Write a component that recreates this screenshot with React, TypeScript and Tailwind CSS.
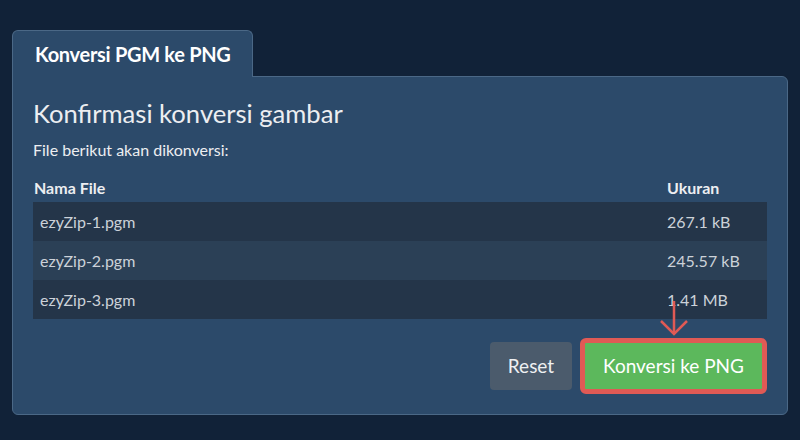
const files = [
  { name: 'ezyZip-1.pgm', size: '267.1 kB' },
  { name: 'ezyZip-2.pgm', size: '245.57 kB' },
  { name: 'ezyZip-3.pgm', size: '1.41 MB' },
];

export default function App() {
  return (
    <div
      className="min-h-[440px] w-full bg-[#112238] px-3 pt-[30px] pb-6"
      style={{ fontFamily: 'Lato, "Open Sans", sans-serif' }}
    >
      {/* Tab */}
      <div className="relative z-10 -mb-px inline-flex h-[47px] w-[241px] items-center rounded-t-md border border-b-0 border-[#4b6886] bg-[#2c4a6a] pl-[22px]">
        <span className="text-[20px] font-bold tracking-[-0.3px] text-white">Konversi PGM ke PNG</span>
      </div>

      {/* Panel */}
      <div className="rounded-tr-md rounded-b-md border border-[#4b6886] bg-[#2c4a6a] px-5 pt-[19px] pb-5">
        <h2 className="text-[25.6px] leading-[34px] text-[#eceef1]">Konfirmasi konversi gambar</h2>
        <p className="mt-[9px] text-[16px] leading-[22px] text-[#eceef1]">File berikut akan dikonversi:</p>

        <table className="mt-[15px] w-full border-collapse">
          <thead>
            <tr className="text-left text-[16px] font-bold text-[#eceef1]">
              <th className="pb-[2px] pl-px font-bold">Nama File</th>
              <th className="w-[100px] pb-[2px] font-bold">Ukuran</th>
            </tr>
          </thead>
          <tbody>
            {files.map((f, i) => (
              <tr key={f.name} className={i % 2 === 0 ? 'bg-[#243549]' : 'bg-[#2b4056]'}>
                <td className="h-[39px] pl-[7px] text-[16px] text-[#ccd2d9]">{f.name}</td>
                <td className="h-[39px] text-[16px] text-[#ccd2d9]">{f.size}</td>
              </tr>
            ))}
          </tbody>
        </table>

        <div className="mt-[19px] flex items-center justify-end gap-2">
          <button className="h-[48px] w-[82px] rounded bg-[#4b5b6c] text-[19px] text-[#eef0f2]">Reset</button>
          <div className="relative">
            <svg
              className="absolute -top-[37px] left-[79px]"
              width="30"
              height="36"
              viewBox="0 0 30 36"
              fill="none"
              stroke="#e05a55"
              strokeWidth="2.5"
            >
              <path d="M15 0 V33" />
              <path d="M2 20 L15 33 L28 20" />
            </svg>
            <button className="h-[56px] w-[187px] rounded-md border-[5px] border-[#e05a55] bg-[#5cb85c] text-[19px] text-white">
              Konversi ke PNG
            </button>
          </div>
        </div>
      </div>
    </div>
  );
}
